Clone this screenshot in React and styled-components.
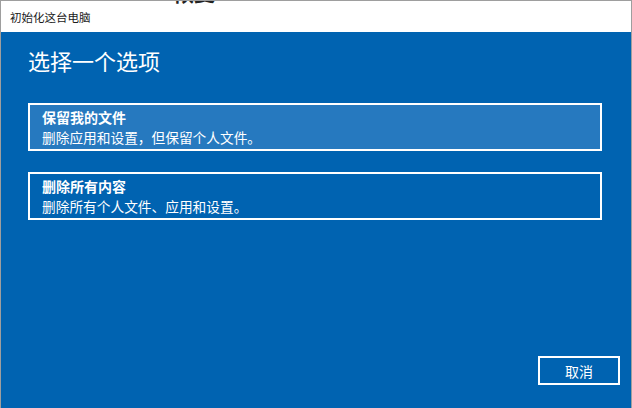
import styled, { createGlobalStyle } from "styled-components";

const GlobalStyle = createGlobalStyle`
    html, body {
        margin: 0;
        padding: 0;
        background: #ffffff;
    }
    body {
        font-family: "Noto Sans CJK SC", "Noto Sans", sans-serif;
    }
`

const Window = styled.div`
    width: 632px;
    height: 408px;
    box-sizing: border-box;
    border: 1px solid #9e9e9e;
    border-bottom: none;
    display: flex;
    flex-direction: column;
    background-color: #0063b1;
    overflow: hidden;
`

const TitleBar = styled.div`
    position: relative;
    height: 30px;
    flex-shrink: 0;
    background-color: #ffffff;
    display: flex;
    align-items: center;
    padding-left: 9px;
    padding-top: 1px;
    font-size: 11.5px;
    color: #1a1a1a;
    overflow: hidden;
`

// bit of the page behind the dialog peeking over the top edge
const BehindText = styled.span`
    position: absolute;
    left: 172px;
    top: -24px;
    font-size: 21px;
    line-height: 30px;
    font-weight: 700;
    color: #222;
`

const Body = styled.div`
    flex: 1;
    display: flex;
    flex-direction: column;
    padding: 13px 29px 23px 27px;
    color: #ffffff;
`

const Heading = styled.h1`
    margin: 0 0 28px 0;
    font-size: 22px;
    font-weight: 400;
    line-height: 30px;
`

const OptionList = styled.div`
    display: flex;
    flex-direction: column;
    gap: 21px;
`

const Option = styled.div`
    height: 48px;
    box-sizing: border-box;
    border: 2px solid #ffffff;
    padding: 3px 12px 0 12px;
    background-color: ${(props) => (props.selected ? "#2679bf" : "transparent")};
    display: flex;
    flex-direction: column;
    justify-content: center;
`

const OptionTitle = styled.div`
    font-size: 14px;
    font-weight: 700;
    line-height: 20px;
`

const OptionDesc = styled.div`
    font-size: 13.7px;
    line-height: 20px;
    padding-bottom: 3px;
`

const Footer = styled.div`
    margin-top: auto;
    display: flex;
    justify-content: flex-end;
    margin-right: -18px;
`

const CancelButton = styled.button`
    width: 82px;
    height: 29px;
    border: 2px solid #ffffff;
    background: transparent;
    color: #ffffff;
    font-family: inherit;
    font-size: 14px;
    padding: 0;
    cursor: pointer;
`

const options = [
    { id: 1, title: "保留我的文件", desc: "删除应用和设置，但保留个人文件。", selected: true },
    { id: 2, title: "删除所有内容", desc: "删除所有个人文件、应用和设置。", selected: false },
]

const App = () => {
    return (
        <>
            <GlobalStyle />
            <Window>
                <TitleBar>
                    <BehindText>恢复</BehindText>
                    初始化这台电脑
                </TitleBar>
                <Body>
                    <Heading>选择一个选项</Heading>
                    <OptionList>
                        {options.map((option) => (
                            <Option key={option.id} selected={option.selected}>
                                <OptionTitle>{option.title}</OptionTitle>
                                <OptionDesc>{option.desc}</OptionDesc>
                            </Option>
                        ))}
                    </OptionList>
                    <Footer>
                        <CancelButton>取消</CancelButton>
                    </Footer>
                </Body>
            </Window>
        </>
    )
}

export default App;
